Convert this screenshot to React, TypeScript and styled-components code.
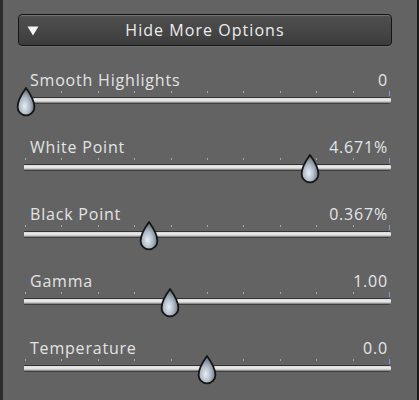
import React from "react";
import styled, { createGlobalStyle } from "styled-components";

const Global = createGlobalStyle`
  html, body { margin: 0; padding: 0; background: #636363; }
  #root { width: 419px; height: 400px; }
`;

const Panel = styled.div`
  box-sizing: border-box;
  width: 419px;
  height: 400px;
  background: #636363;
  border-left: 3px solid #2c2c2c;
  border-right: 2px solid #1c1c1c;
  padding-top: 14px;
  font-family: "Open Sans", "DejaVu Sans", sans-serif;
  overflow: hidden;
`;

const ToggleButton = styled.div`
  box-sizing: border-box;
  margin-left: 15px;
  width: 374px;
  height: 32px;
  border: 1px solid #151515;
  border-radius: 4px;
  background: linear-gradient(to bottom, #5c5c5c 0px, #4e4e4e 2px, #474747 14px, #3c3c3c 100%);
  box-shadow: inset 0 1px 0 #727272, 0 1px 0 #707070;
  display: grid;
  grid-template-columns: 24px 1fr 24px;
  align-items: center;
  color: #ececec;
  font-size: 16px;
  letter-spacing: 1.05px;
`;

const Caret = styled.svg`
  width: 12px;
  height: 10px;
  margin-left: 8px;
  margin-top: 1px;
`;

const ButtonLabel = styled.span`
  text-align: center;
  line-height: 20px;
`;

const Rows = styled.div`
  margin-top: 24px;
  padding: 0 26px 0 21px;
`;

const Row = styled.div`
  height: 67px;
`;

const Header = styled.div`
  display: flex;
  justify-content: space-between;
  height: 20px;
  line-height: 20px;
  padding: 0 3px 0 6px;
  font-size: 16px;
  letter-spacing: 0.8px;
  color: #e3e3e3;
`;

const Value = styled.span`
  color: #e2e6ea;
`;

const Scale = styled.div`
  position: relative;
  height: 47px;
`;

const Ticks = styled.div`
  display: flex;
  justify-content: space-between;
  margin-top: 1px;
  padding: 0 1px;
  height: 2px;
`;

const Tick = styled.span<{ $end?: boolean }>`
  width: 1px;
  height: ${(p) => (p.$end ? "5px" : "2px")};
  background: ${(p) => (p.$end ? "#7d9bd0" : "#a8a8a8")};
`;

const Track = styled.div`
  margin-top: 4px;
  height: 7px;
  border-radius: 1px 3px 3px 1px;
  background: linear-gradient(
    to bottom,
    #2f2f2f 0px,
    #3a3a3a 1px,
    #d4d4d4 1px,
    #f0f0f0 3px,
    #c8c8c8 4.5px,
    #8c8c8c 5.5px,
    #3e3e3e 6px,
    #3e3e3e 7px
  );
`;

const Thumb = styled.svg`
  position: absolute;
  top: -4px;
  width: 20px;
  height: 30px;
`;

type SliderProps = { label: string; value: string; frac: number; id: string };

const Slider = ({ label, value, frac, id }: SliderProps) => (
  <Row>
    <Header>
      <span>{label}</span>
      <Value>{value}</Value>
    </Header>
    <Scale>
      <Ticks>
        {Array.from({ length: 11 }).map((_, i) => (
          <Tick key={i} $end={i === 10} />
        ))}
      </Ticks>
      <Track />
      <Thumb viewBox="0 0 20 30" style={{ left: `${frac * 363 + 2 - 10}px` }}>
        <defs>
          <radialGradient id={`g-${id}`} cx="0.42" cy="0.66" r="0.6">
            <stop offset="0" stopColor="#e8eef4" />
            <stop offset="0.5" stopColor="#b0bcc8" />
            <stop offset="1" stopColor="#66717d" />
          </radialGradient>
        </defs>
        <path
          d="M10 1 C10 1 1.6 12.5 1.6 20 A8.4 8.4 0 0 0 18.4 20 C18.4 12.5 10 1 10 1 Z"
          fill={`url(#g-${id})`}
          stroke="#161616"
          strokeWidth="1.8"
          strokeLinejoin="round"
        />
      </Thumb>
    </Scale>
  </Row>
);

const sliders = [
  { label: "Smooth Highlights", value: "0", frac: 0 },
  { label: "White Point", value: "4.671%", frac: 0.782 },
  { label: "Black Point", value: "0.367%", frac: 0.339 },
  { label: "Gamma", value: "1.00", frac: 0.398 },
  { label: "Temperature", value: "0.0", frac: 0.499 },
];

export default function App() {
  return (
    <>
      <Global />
      <Panel>
        <ToggleButton>
          <Caret viewBox="0 0 12 10">
            <path d="M0.5 0.5 L11.5 0.5 L6 9.5 Z" fill="#f4f4f4" />
          </Caret>
          <ButtonLabel>Hide More Options</ButtonLabel>
          <span />
        </ToggleButton>
        <Rows>
          {sliders.map((s, i) => (
            <Slider key={s.label} id={String(i)} {...s} />
          ))}
        </Rows>
      </Panel>
    </>
  );
}
